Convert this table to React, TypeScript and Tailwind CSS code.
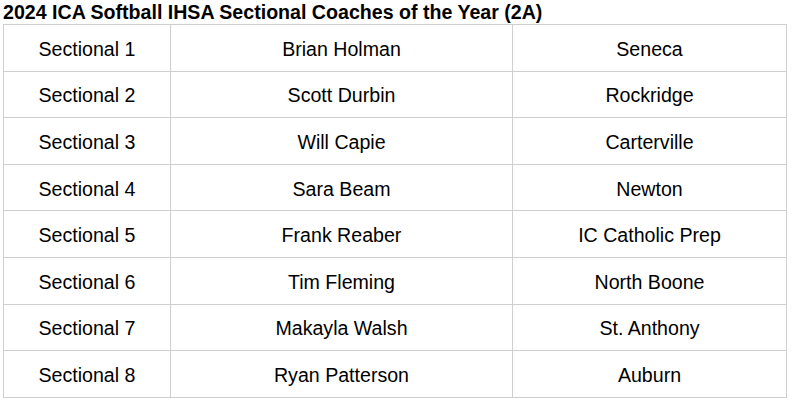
const rows = [
  ["Sectional 1", "Brian Holman", "Seneca"],
  ["Sectional 2", "Scott Durbin", "Rockridge"],
  ["Sectional 3", "Will Capie", "Carterville"],
  ["Sectional 4", "Sara Beam", "Newton"],
  ["Sectional 5", "Frank Reaber", "IC Catholic Prep"],
  ["Sectional 6", "Tim Fleming", "North Boone"],
  ["Sectional 7", "Makayla Walsh", "St. Anthony"],
  ["Sectional 8", "Ryan Patterson", "Auburn"],
];

export default function App() {
  return (
    <div className="w-[799px] h-[412px] bg-white font-['Liberation_Sans',Arial,sans-serif] text-black">
      <h1 className="h-[24px] pl-[3px] text-[19.6px] leading-[24px] font-bold">
        2024 ICA Softball IHSA Sectional Coaches of the Year (2A)
      </h1>
      <table className="ml-[3px] w-[783px] border-collapse table-fixed">
        <colgroup>
          <col className="w-[167px]" />
          <col className="w-[342px]" />
          <col className="w-[274px]" />
        </colgroup>
        <tbody>
          {rows.map((r) => (
            <tr key={r[0]} className="h-[46.6px]">
              {r.map((c, i) => (
                <td
                  key={i}
                  className="border border-[#cfcfcf] p-0 pt-[2px] text-center align-middle text-[19.6px] leading-[22px]"
                >
                  {c}
                </td>
              ))}
            </tr>
          ))}
        </tbody>
      </table>
    </div>
  );
}
